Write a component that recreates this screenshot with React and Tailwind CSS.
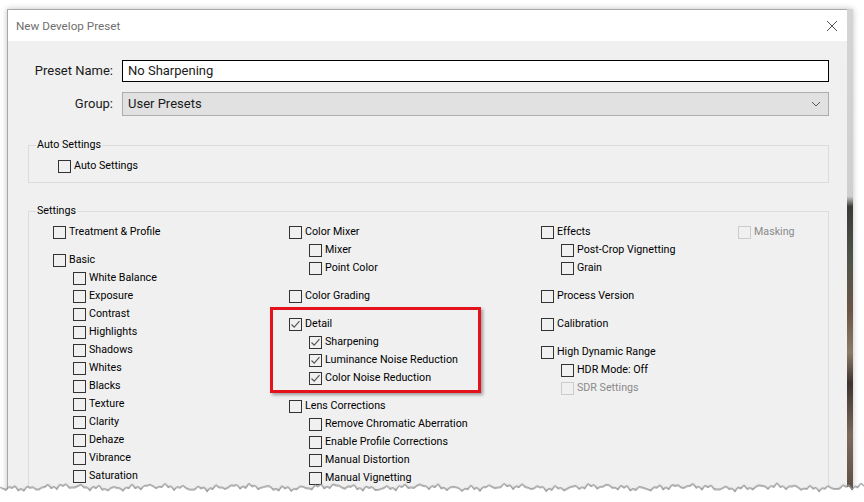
import React from 'react'

const cols = [
  [
    [['Treatment & Profile', 0, 0]],
    [
      ['Basic', 0, 0],
      ['White Balance', 1, 0],
      ['Exposure', 1, 0],
      ['Contrast', 1, 0],
      ['Highlights', 1, 0],
      ['Shadows', 1, 0],
      ['Whites', 1, 0],
      ['Blacks', 1, 0],
      ['Texture', 1, 0],
      ['Clarity', 1, 0],
      ['Dehaze', 1, 0],
      ['Vibrance', 1, 0],
      ['Saturation', 1, 0],
    ],
  ],
  [
    [
      ['Color Mixer', 0, 0],
      ['Mixer', 1, 0],
      ['Point Color', 1, 0],
    ],
    [['Color Grading', 0, 0]],
    [
      ['Detail', 0, 1],
      ['Sharpening', 1, 1],
      ['Luminance Noise Reduction', 1, 1],
      ['Color Noise Reduction', 1, 1],
    ],
    [
      ['Lens Corrections', 0, 0],
      ['Remove Chromatic Aberration', 1, 0],
      ['Enable Profile Corrections', 1, 0],
      ['Manual Distortion', 1, 0],
      ['Manual Vignetting', 1, 0],
    ],
  ],
  [
    [
      ['Effects', 0, 0],
      ['Post-Crop Vignetting', 1, 0],
      ['Grain', 1, 0],
    ],
    [['Process Version', 0, 0]],
    [['Calibration', 0, 0]],
    [
      ['High Dynamic Range', 0, 0],
      ['HDR Mode: Off', 1, 0],
      ['SDR Settings', 1, 2],
    ],
  ],
  [[['Masking', 0, 2]]],
]

function Box({ state }) {
  if (state === 2) {
    return <span className="w-[13px] h-[13px] shrink-0 border border-[#cccccc] bg-[#f0f0f0]" />
  }
  return (
    <span className="w-[13px] h-[13px] shrink-0 border border-[#333333] bg-[#f0f0f0] flex items-center justify-center">
      {state === 1 && (
        <svg width="11" height="11" viewBox="0 0 11 11">
          <path d="M1.5 5.5 L4.2 8.2 L9.5 2.2" fill="none" stroke="#555" strokeWidth="1.2" />
        </svg>
      )}
    </span>
  )
}

function Check({ label, state }) {
  return (
    <div className="h-[18px] flex items-center gap-[3px]">
      <Box state={state} />
      <span className={state === 2 ? 'text-[#8a8a8a]' : 'text-black'}>{label}</span>
    </div>
  )
}

function Torn() {
  const pts = []
  for (let x = 0; x <= 864; x += 3) {
    const y = 9 + Math.sin(x * 0.37) * 1.6 + Math.sin(x * 1.13) * 1.4 + Math.sin(x * 0.071) * 1.2
    pts.push(`${x},${y.toFixed(1)}`)
  }
  const line = pts.join(' ')
  return (
    <svg className="absolute left-0 bottom-0" width="864" height="24" viewBox="0 0 864 24">
      <defs>
        <filter id="b" x="-5%" y="-50%" width="110%" height="200%">
          <feGaussianBlur stdDeviation="1.3" />
        </filter>
      </defs>
      <polyline points={line} transform="translate(0,2)" fill="none" stroke="#777" strokeWidth="2" filter="url(#b)" />
      <polygon points={`0,24 ${line} 864,24`} transform="translate(0,1.5)" fill="#fff" />
      <polyline points={line} fill="none" stroke="#9a9a9a" strokeWidth="0.8" />
    </svg>
  )
}

export default function App() {
  return (
    <div className="relative w-[864px] h-[502px] overflow-hidden bg-white font-['Roboto',sans-serif] text-[10.7px] leading-[16px]">
      <div className="pt-[9px] pl-[7px] flex">
        <div className="flex shadow-[0_0_6px_rgba(0,0,0,0.25)]">
          <div className="w-[840px] h-[520px] border-l border-t border-[#a8a8a8] bg-[#f0f0f0] flex flex-col">
            <div className="h-[31px] bg-white flex items-center justify-between pl-[8px] pr-[9px]">
              <span className="text-[#6f6f6f] text-[11.7px]">New Develop Preset</span>
              <svg width="12" height="12" viewBox="0 0 12 12">
                <path d="M1 1 L11 11 M11 1 L1 11" stroke="#555" strokeWidth="1" />
              </svg>
            </div>

            <div className="pt-[19px] pr-[18px] flex flex-col text-[13px] text-[#1a1a1a]">
              <div className="flex items-center">
                <span className="w-[105px] text-right">Preset Name:</span>
                <div className="ml-[9px] flex-1 h-[22px] border border-black bg-white flex items-center pl-[5px]">
                  No Sharpening
                </div>
              </div>
              <div className="flex items-center mt-[10px]">
                <span className="w-[105px] text-right">Group:</span>
                <div className="ml-[9px] flex-1 h-[24px] border border-[#adadad] bg-[#e1e1e1] flex items-center justify-between pl-[5px] pr-[7px]">
                  <span>User Presets</span>
                  <svg width="10" height="6" viewBox="0 0 10 6">
                    <path d="M1 1 L5 5 L9 1" fill="none" stroke="#555" strokeWidth="1" />
                  </svg>
                </div>
              </div>
            </div>

            <div className="ml-[20px] mr-[18px] mt-[29px] border border-[#dcdcdc] pl-[29px] pb-[7px]">
              <div className="-mt-[9px] -ml-[22px] px-[1px] w-fit bg-[#f0f0f0] text-black">Auto Settings</div>
              <div className="mt-[4px]">
                <Check label="Auto Settings" state={0} />
              </div>
            </div>

            <div className="relative ml-[20px] mr-[18px] mt-[28px] border border-[#dcdcdc] pl-[24px] pb-[40px]">
              <div className="-mt-[9px] -ml-[17px] px-[1px] w-fit bg-[#f0f0f0] text-black">Settings</div>
              <div className="mt-[4px] grid grid-cols-[236px_252px_197px_1fr]">
                {cols.map((col, ci) => (
                  <div key={ci} className="flex flex-col gap-[10px]">
                    {col.map((grp, gi) => (
                      <div key={gi} className="flex flex-col">
                        {grp.map(([label, lvl, st]) => (
                          <div key={label} className={lvl ? 'pl-[20px]' : ''}>
                            <Check label={label} state={st} />
                          </div>
                        ))}
                      </div>
                    ))}
                  </div>
                ))}
              </div>
              <div className="absolute left-[241px] top-[95px] w-[211px] h-[86px] border-[3px] border-[#e3121b] shadow-[2px_2px_3px_rgba(0,0,0,0.35)]" />
            </div>
          </div>
          <div className="w-[6px] h-[520px] bg-[linear-gradient(to_bottom,#d4d4d4_0%,#cfcfcf_36%,#3b3a36_38%,#4d5548_48%,#6a5548_58%,#8a7a68_66%,#3e342e_72%,#7b6a5c_82%,#4a3d35_100%)]" />
        </div>
      </div>
      <Torn />
    </div>
  )
}
